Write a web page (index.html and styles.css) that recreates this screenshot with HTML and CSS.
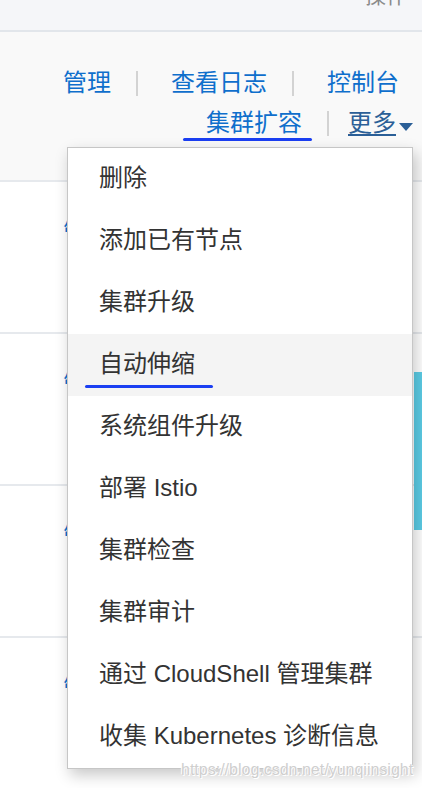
FILE: index.html
```html
<!DOCTYPE html>
<html lang="zh-CN">
<head>
<meta charset="utf-8">
<title>集群操作</title>
<link rel="stylesheet" href="styles.css">
</head>
<body>
<div class="table">
  <div class="thead"><span class="th">操作</span></div>

  <div class="row row-hover row-first">
    <div class="actions">
      <div class="line line-1">
        <a class="link">管理</a><span class="sep sep-1"></span>
        <a class="link">查看日志</a><span class="sep sep-1"></span>
        <a class="link">控制台</a>
      </div>
      <div class="line line-2">
        <a class="link link-marked">集群扩容<span class="mark mark-expand"></span></a><span class="sep sep-2"></span>
        <a class="link link-more">更多</a><span class="caret"></span>
      </div>
    </div>
  </div>

  <div class="row">
    <div class="actions">
      <div class="line line-1">
        <a class="link">管理</a><span class="sep sep-1"></span>
        <a class="link">查看日志</a><span class="sep sep-1"></span>
        <a class="link">控制台</a>
      </div>
      <div class="line line-2">
        <a class="link">集群扩容</a><span class="sep sep-2"></span>
        <a class="link">更多</a><span class="caret caret-blue"></span>
      </div>
    </div>
  </div>

  <div class="row">
    <div class="actions">
      <div class="line line-1">
        <a class="link">管理</a><span class="sep sep-1"></span>
        <a class="link">查看日志</a><span class="sep sep-1"></span>
        <a class="link">控制台</a>
      </div>
      <div class="line line-2">
        <a class="link">集群扩容</a><span class="sep sep-2"></span>
        <a class="link">更多</a><span class="caret caret-blue"></span>
      </div>
    </div>
  </div>

  <div class="row">
    <div class="actions">
      <div class="line line-1">
        <a class="link">管理</a><span class="sep sep-1"></span>
        <a class="link">查看日志</a><span class="sep sep-1"></span>
        <a class="link">控制台</a>
      </div>
      <div class="line line-2">
        <a class="link">集群扩容</a><span class="sep sep-2"></span>
        <a class="link">更多</a><span class="caret caret-blue"></span>
      </div>
    </div>
  </div>

  <div class="row row-last">
    <div class="actions">
      <div class="line line-1">
        <a class="link">管理</a><span class="sep sep-1"></span>
        <a class="link">查看日志</a><span class="sep sep-1"></span>
        <a class="link">控制台</a>
      </div>
      <div class="line line-2">
        <a class="link">集群扩容</a><span class="sep sep-2"></span>
        <a class="link">更多</a><span class="caret caret-blue"></span>
      </div>
    </div>
  </div>
</div>

<div class="side-tab"></div>

<ul class="dropdown">
  <li class="item">删除</li>
  <li class="item">添加已有节点</li>
  <li class="item">集群升级</li>
  <li class="item item-hover">自动伸缩<span class="mark mark-scale"></span></li>
  <li class="item">系统组件升级</li>
  <li class="item">部署 Istio</li>
  <li class="item">集群检查</li>
  <li class="item">集群审计</li>
  <li class="item">通过 CloudShell 管理集群</li>
  <li class="item">收集 Kubernetes 诊断信息</li>
</ul>

<div class="watermark">https://blog.csdn.net/yunqiinsight</div>
</body>
</html>
```

FILE: styles.css
```css
* { box-sizing: border-box; }

html, body {
  margin: 0;
  padding: 0;
  width: 422px;
  height: 788px;
  overflow: hidden;
  background: #ffffff;
  font-family: "Liberation Sans", "Noto Sans CJK SC", sans-serif;
}

.table {
  width: 422px;
}

.thead {
  height: 32px;
  background: #f5f6f9;
  border-bottom: 2px solid #e2e6eb;
  display: flex;
  justify-content: flex-end;
  padding-right: 15px;
  overflow: hidden;
}

.th {
  font-size: 21px;
  line-height: 21px;
  margin-top: -15px;
  color: #8a8a8a;
}

.row {
  height: 152px;
  border-bottom: 2px solid #e6e9ed;
  overflow: hidden;
}

.row-first {
  height: 150px;
}

.row-last {
  border-bottom: none;
}

.row-hover {
  background: #f9f9f9;
}

.actions {
  padding-top: 31px;
  display: flex;
  flex-direction: column;
  align-items: stretch;
}

.line {
  height: 40px;
  display: flex;
  align-items: center;
  justify-content: flex-end;
}

.line-1 { padding-right: 23px; }
.line-2 { padding-right: 9px; }

.link {
  font-size: 24px;
  line-height: 40px;
  color: #0f6fcc;
  white-space: nowrap;
  position: relative;
  cursor: pointer;
}

.link-more {
  color: #2b5f97;
  text-decoration: underline;
  text-decoration-thickness: 2px;
  text-underline-offset: 3px;
}

.sep {
  width: 2px;
  height: 25px;
  background: #d3d3d3;
}

.sep-1 { margin: 0 33px 0 25px; }
.sep-2 { margin: 0 19px 0 25px; }

.caret {
  width: 0;
  height: 0;
  margin-left: 3px;
  margin-top: 7px;
  border-left: 7.5px solid transparent;
  border-right: 7.5px solid transparent;
  border-top: 8px solid #2b5f97;
}

.caret-blue {
  border-top-color: #0f6fcc;
}

.mark {
  position: absolute;
  height: 3px;
  border-radius: 2px;
  background: #1b3ff2;
}

.mark-expand {
  left: -23px;
  right: -10px;
  top: 35px;
}

.side-tab {
  position: absolute;
  right: 0;
  top: 372px;
  width: 8px;
  height: 158px;
  background: #5ccde6;
}

.dropdown {
  position: absolute;
  left: 67px;
  top: 147px;
  width: 346px;
  margin: 0;
  padding: 0;
  list-style: none;
  background: #ffffff;
  border: 1px solid #c6c6c6;
  box-shadow: 3px 6px 14px rgba(0, 0, 0, 0.22);
}

.item {
  position: relative;
  height: 62px;
  display: flex;
  align-items: center;
  padding-left: 31px;
  padding-bottom: 7px;
  font-size: 24px;
  color: #333333;
  white-space: nowrap;
}

.item-hover {
  background: #f4f4f4;
}

.mark-scale {
  left: 17px;
  width: 128px;
  top: 51px;
}

.watermark {
  position: absolute;
  left: 181px;
  top: 760px;
  font-size: 16px;
  line-height: 19px;
  color: #cfcfcf;
  white-space: nowrap;
  text-shadow: 0 0 1px #ffffff, 0 0 1px #ffffff, 1px 1px 0 #ffffff, -1px -1px 0 #ffffff;
}
```
